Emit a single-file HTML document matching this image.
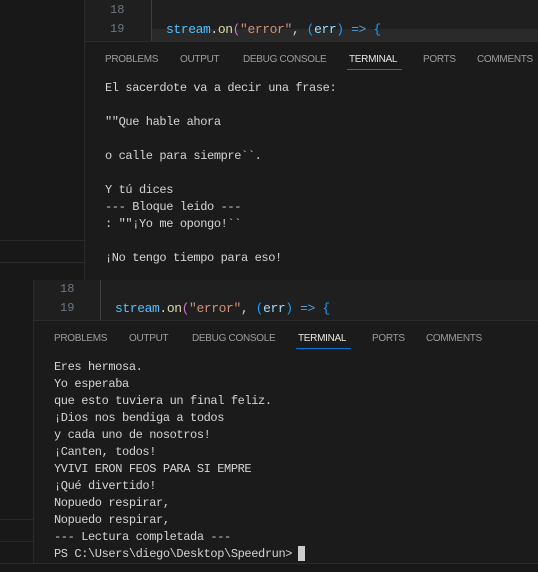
<!DOCTYPE html>
<html><head><style>
body{margin:0;width:538px;height:572px;background:#1b1b1b;position:relative;overflow:hidden;font-family:"Liberation Mono",monospace}
.a{position:absolute}
.mono{font-family:"Liberation Mono",monospace;font-size:12px;letter-spacing:-0.4px;color:#d4d4d4;white-space:pre}
.tab{position:absolute;font-family:"Liberation Sans",sans-serif;font-size:10px;letter-spacing:-0.3px;color:#9d9d9d;white-space:pre}
.ln{position:absolute;font-size:12px;color:#6e7681;font-family:"Liberation Mono",monospace}
</style></head><body>
<div class="a" style="left:0;top:0;width:84px;height:280px;background:#181818"></div>
<div class="a" style="left:0;top:240px;width:84px;height:1px;background:#2b2b2b"></div>
<div class="a" style="left:0;top:262px;width:84px;height:1px;background:#2b2b2b"></div>
<div class="a" style="left:84px;top:0;width:1px;height:280px;background:#2b2b2b"></div>
<div class="a" style="left:85px;top:0;width:453px;height:41px;background:#1f1f1f"></div>
<div class="a" style="left:151px;top:29px;width:387px;height:12px;background:#2a2a2a"></div>
<div class="a" style="left:151px;top:0;width:1px;height:41px;background:#404040"></div>
<div class="ln" style="left:110px;top:3px">18</div>
<div class="ln" style="left:110px;top:22px">19</div>
<div class="a mono" style="left:166px;top:22px;font-size:13px"><span style="color:#4fc1ff">stream</span>.<span style="color:#dcdcaa">on</span><span style="color:#da70d6">(</span><span style="color:#ce9178">"error"</span>, <span style="color:#179fff">(</span><span style="color:#9cdcfe">err</span><span style="color:#179fff">)</span> <span style="color:#569cd6">=&gt;</span> <span style="color:#179fff">{</span></div>
<div class="a" style="left:85px;top:41px;width:453px;height:1px;background:#2b2b2b"></div>
<div class="tab" style="left:105px;top:54px">PROBLEMS</div>
<div class="tab" style="left:180px;top:54px">OUTPUT</div>
<div class="tab" style="left:243px;top:54px">DEBUG CONSOLE</div>
<div class="tab" style="left:349px;top:54px;color:#e7e7e7">TERMINAL</div>
<div class="a" style="left:347px;top:69px;width:55px;height:1px;background:#0078d4"></div>
<div class="tab" style="left:423px;top:54px">PORTS</div>
<div class="tab" style="left:477px;top:54px">COMMENTS</div>
<div class="a mono" style="left:105px;top:80px;line-height:17px">El sacerdote va a decir una frase:

""Que hable ahora

o calle para siempre``.

Y tú dices
--- Bloque leido ---
: ""¡Yo me opongo!``

¡No tengo tiempo para eso!</div>
<div class="a" style="left:0;top:280px;width:538px;height:292px;background:#1b1b1b"></div>
<div class="a" style="left:0;top:280px;width:33px;height:292px;background:#181818"></div>
<div class="a" style="left:0;top:519px;width:33px;height:1px;background:#2b2b2b"></div>
<div class="a" style="left:0;top:541px;width:33px;height:1px;background:#2b2b2b"></div>
<div class="a" style="left:33px;top:280px;width:1px;height:283px;background:#2b2b2b"></div>
<div class="a" style="left:34px;top:280px;width:504px;height:40px;background:#1f1f1f"></div>
<div class="a" style="left:100px;top:280px;width:1px;height:40px;background:#404040"></div>
<div class="ln" style="left:60px;top:282px">18</div>
<div class="ln" style="left:60px;top:301px">19</div>
<div class="a mono" style="left:115px;top:301px;font-size:13px"><span style="color:#4fc1ff">stream</span>.<span style="color:#dcdcaa">on</span><span style="color:#da70d6">(</span><span style="color:#ce9178">"error"</span>, <span style="color:#179fff">(</span><span style="color:#9cdcfe">err</span><span style="color:#179fff">)</span> <span style="color:#569cd6">=&gt;</span> <span style="color:#179fff">{</span></div>
<div class="a" style="left:34px;top:320px;width:504px;height:1px;background:#2b2b2b"></div>
<div class="tab" style="left:54px;top:333px">PROBLEMS</div>
<div class="tab" style="left:129px;top:333px">OUTPUT</div>
<div class="tab" style="left:192px;top:333px">DEBUG CONSOLE</div>
<div class="tab" style="left:298px;top:333px;color:#e7e7e7">TERMINAL</div>
<div class="a" style="left:296px;top:348px;width:55px;height:1px;background:#0078d4"></div>
<div class="tab" style="left:372px;top:333px">PORTS</div>
<div class="tab" style="left:426px;top:333px">COMMENTS</div>
<div class="a mono" style="left:54px;top:359px;line-height:17px">Eres hermosa.
Yo esperaba
que esto tuviera un final feliz.
¡Dios nos bendiga a todos
y cada uno de nosotros!
¡Canten, todos!
YVIVI ERON FEOS PARA SI EMPRE
¡Qué divertido!
Nopuedo respirar,
Nopuedo respirar,
--- Lectura completada ---
PS C:\Users\diego\Desktop\Speedrun&gt; </div>
<div class="a" style="left:298px;top:546px;width:7px;height:15px;background:#cccccc"></div>
<div class="a" style="left:0;top:563px;width:538px;height:1px;background:#2b2b2b"></div>
<div class="a" style="left:0;top:564px;width:538px;height:8px;background:#181818"></div>
</body></html>
